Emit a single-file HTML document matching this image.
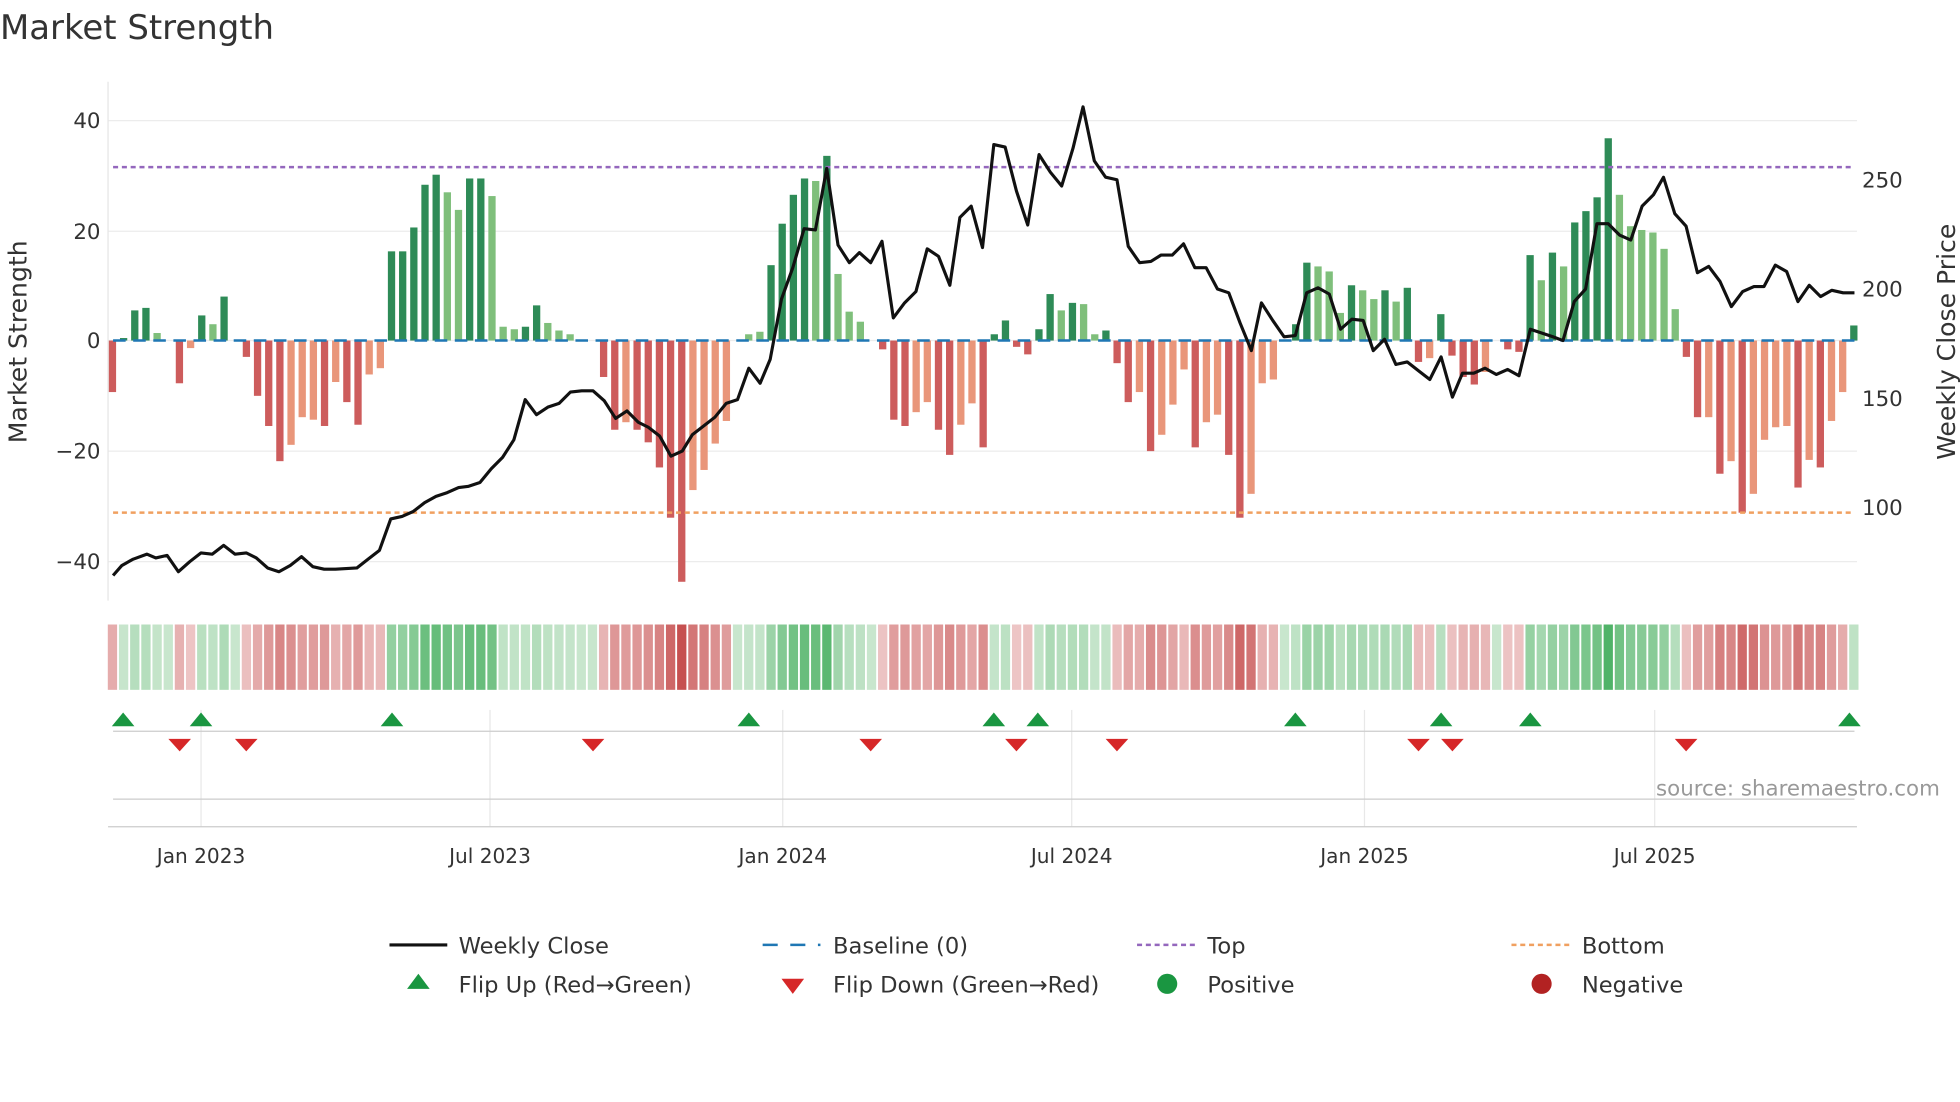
<!DOCTYPE html>
<html><head><meta charset="utf-8"><style>
html,body{margin:0;padding:0;background:#fff;}
svg{display:block;font-family:"DejaVu Sans","Liberation Sans",sans-serif;}
</style></head><body>
<svg id="s" width="1960" height="1102" viewBox="0 0 1560 877" xmlns="http://www.w3.org/2000/svg">
<text x="0" y="31" font-size="27" fill="#333">Market Strength</text>
<g stroke="#ececec" stroke-width="1">
<line x1="86" y1="96" x2="1478" y2="96"/><line x1="86" y1="184" x2="1478" y2="184"/>
<line x1="86" y1="271" x2="1478" y2="271"/><line x1="86" y1="359" x2="1478" y2="359"/>
<line x1="86" y1="447" x2="1478" y2="447"/>
</g>
<line x1="86" y1="65" x2="86" y2="478" stroke="#e6e6e6"/>
<g font-size="17" fill="#333" text-anchor="end">
<text x="80" y="102">40</text><text x="80" y="190">20</text><text x="80" y="277">0</text>
<text x="80" y="365">−20</text><text x="80" y="453">−40</text>
</g>
<g font-size="17" fill="#333">
<text x="1482" y="149">250</text><text x="1482" y="236">200</text><text x="1482" y="323">150</text><text x="1482" y="410">100</text>
</g>
<text transform="translate(21,272) rotate(-90)" font-size="20" fill="#333" text-anchor="middle">Market Strength</text>
<text transform="translate(1556,272) rotate(-90)" font-size="20" fill="#333" text-anchor="middle">Weekly Close Price</text>
<g id="bars"></g>
<line x1="90" y1="271" x2="1476" y2="271" stroke="#1f77b4" stroke-width="2" stroke-dasharray="10,6"/>
<line x1="90" y1="133" x2="1476" y2="133" stroke="#9467bd" stroke-width="2" stroke-dasharray="4,3"/>
<line x1="90" y1="408" x2="1476" y2="408" stroke="#f0a060" stroke-width="2" stroke-dasharray="4,3"/>
<polyline id="price" fill="none" stroke="#111" stroke-width="2.5" stroke-linejoin="round"/>
<g id="heat"></g>
<g stroke="#e8e8e8"><line x1="160" y1="565" x2="160" y2="658"/><line x1="390" y1="565" x2="390" y2="658"/><line x1="623" y1="565" x2="623" y2="658"/><line x1="853" y1="565" x2="853" y2="658"/><line x1="1086" y1="565" x2="1086" y2="658"/><line x1="1317" y1="565" x2="1317" y2="658"/></g>
<line x1="90" y1="582" x2="1476" y2="582" stroke="#ccc"/>
<line x1="90" y1="636" x2="1476" y2="636" stroke="#ccc"/>
<line x1="86" y1="658" x2="1478" y2="658" stroke="#ccc"/>
<g id="mk"></g>
<text x="1544" y="633" font-size="17" fill="#999" text-anchor="end">source: sharemaestro.com</text>
<g font-size="16" fill="#333" text-anchor="middle">
<text x="160" y="687">Jan 2023</text><text x="390" y="687">Jul 2023</text><text x="623" y="687">Jan 2024</text><text x="853" y="687">Jul 2024</text><text x="1086" y="687">Jan 2025</text><text x="1317" y="687">Jul 2025</text>
</g>
<g font-size="18" fill="#333">
<line x1="310" y1="752" x2="356" y2="752" stroke="#111" stroke-width="2.5"/><text x="365" y="759">Weekly Close</text>
<line x1="607" y1="752" x2="653" y2="752" stroke="#1f77b4" stroke-width="2" stroke-dasharray="12,10"/><text x="663" y="759">Baseline (0)</text>
<line x1="905" y1="752" x2="951" y2="752" stroke="#9467bd" stroke-width="2" stroke-dasharray="4,3"/><text x="961" y="759">Top</text>
<line x1="1203" y1="752" x2="1249" y2="752" stroke="#f0a060" stroke-width="2" stroke-dasharray="4,3"/><text x="1259" y="759">Bottom</text>
<polygon points="333,775 324,787 342,787" fill="#1a9641"/><text x="365" y="790">Flip Up (Red→Green)</text>
<polygon points="622,779 640,779 631,791" fill="#d62728"/><text x="663" y="790">Flip Down (Green→Red)</text>
<circle cx="929" cy="783" r="8" fill="#1a9641"/><text x="961" y="790">Positive</text>
<circle cx="1227" cy="783" r="8" fill="#b22222"/><text x="1259" y="790">Negative</text>
</g>
</svg>
<script>
var B=[[312,1],[269,1],[247,1],[245,1],[265,0],[271,0],[305,1],[277,0],[251,1],[258,0],[236,1],[271,0],[284,1],[315,1],[339,1],[367,1],[354,0],[332,0],[334,0],[339,1],[304,0],[320,1],[338,1],[298,0],[293,0],[200,1],[200,1],[181,1],[147,1],[139,1],[153,0],[167,0],[142,1],[142,1],[156,0],[260,0],[262,0],[260,1],[243,1],[257,0],[263,0],[266,0],[271,0],[271,0],[300,1],[342,1],[336,0],[342,1],[352,1],[372,1],[412,1],[463,1],[390,0],[374,0],[353,0],[335,0],[271,0],[266,0],[264,0],[211,1],[178,1],[155,1],[142,1],[144,0],[124,1],[218,0],[248,0],[256,0],[271,0],[278,1],[334,1],[339,1],[328,0],[320,0],[342,1],[362,1],[338,0],[321,0],[356,1],[266,1],[255,1],[276,1],[282,1],[262,1],[234,1],[247,0],[241,1],[242,0],[266,0],[263,1],[289,1],[320,1],[312,0],[359,1],[346,0],[322,0],[294,0],[356,1],[336,0],[330,0],[362,1],[412,1],[393,0],[305,0],[302,0],[271,0],[258,1],[209,1],[212,0],[216,0],[249,0],[227,1],[231,0],[238,0],[231,1],[240,0],[229,1],[288,1],[285,0],[250,1],[283,1],[300,1],[306,1],[296,0],[271,0],[278,1],[280,1],[203,1],[223,0],[201,1],[212,0],[177,1],[168,1],[157,1],[110,1],[155,0],[180,0],[183,0],[185,0],[198,0],[246,0],[284,1],[332,1],[332,0],[377,1],[367,0],[408,1],[393,0],[350,0],[340,0],[339,0],[388,1],[366,0],[372,1],[335,0],[312,0],[259,1]];
var n=B.length,x0=89.5,dx=(1475.5-89.5)/(n-1),ns="http://www.w3.org/2000/svg";
function el(t,a,p){var e=document.createElementNS(ns,t);for(var k in a)e.setAttribute(k,a[k]);document.getElementById(p).appendChild(e);}
B.forEach(function(b,i){var x=x0+i*dx,y=b[0],c;
 var v=(271-y)/4.375;
 if(y<271)c=b[1]?"#2e8b57":"#7fbf7b";else c=b[1]?"#cd5c5c":"#e9967a";
 if(Math.abs(y-271)>1)el("rect",{x:x-2.9,y:Math.min(y,271),width:5.8,height:Math.abs(y-271),fill:c},"bars");
 var a=Math.min(1,Math.abs(v)/40),hc;
 if(v>=0){hc="rgb("+Math.round(200-130*a)+","+Math.round(230-55*a)+","+Math.round(205-110*a)+")";}
 else{hc="rgb("+Math.round(238-40*a)+","+Math.round(200-120*a)+","+Math.round(200-120*a)+")";}
 el("rect",{x:x-3.7,y:497,width:7.4,height:52,fill:hc},"heat");
});
var P="90,458 97,450 106,445 117,441 124,444 133,442 142,455 151,447 160,440 169,441 178,434 187,441 196,440 204,444 213,452 222,455 231,450 240,443 249,451 258,453 267,453 284,452 293,445 302,438 311,413 320,411 329,407 338,400 347,395 356,392 365,388 373,387 382,384 391,373 400,364 409,350 418,318 427,330 436,324 445,321 454,312 463,311 472,311 481,319 490,333 499,327 508,336 516,340 525,347 534,363 543,359 551,346 560,339 569,332 578,321 587,318 596,293 605,305 613,286 622,238 631,213 640,182 649,183 658,134 667,195 676,209 684,201 693,209 702,192 711,253 720,241 729,232 738,198 747,204 756,227 764,173 773,164 782,197 791,115 800,117 809,152 818,179 827,123 836,137 845,148 854,118 862,85 871,128 880,141 889,143 898,196 907,209 916,208 924,203 933,203 942,194 951,213 960,213 969,230 978,233 987,257 996,279 1004,241 1013,255 1022,268 1031,267 1040,233 1049,229 1058,234 1067,262 1076,254 1085,255 1093,279 1102,270 1111,290 1120,288 1129,295 1138,302 1147,284 1156,316 1164,297 1173,297 1182,293 1191,298 1200,294 1209,299 1218,262 1227,265 1236,268 1244,271 1253,240 1262,230 1271,178 1280,178 1289,187 1298,191 1307,164 1316,155 1324,141 1333,170 1342,180 1351,217 1360,212 1369,224 1378,244 1387,232 1396,228 1404,228 1413,211 1422,216 1431,240 1440,227 1449,236 1458,231 1467,233 1476,233";
document.getElementById("price").setAttribute("points",P);
[98,160,312,596,791,826,1031,1147,1218,1472].forEach(function(x){el("polygon",{points:(x)+",567 "+(x-9)+",578 "+(x+9)+",578",fill:"#1a9641"},"mk");});
[143,196,472,693,809,889,1129,1156,1342].forEach(function(x){el("polygon",{points:(x-9)+",588 "+(x+9)+",588 "+x+",598",fill:"#d62728"},"mk");});
</script>
</body></html>
